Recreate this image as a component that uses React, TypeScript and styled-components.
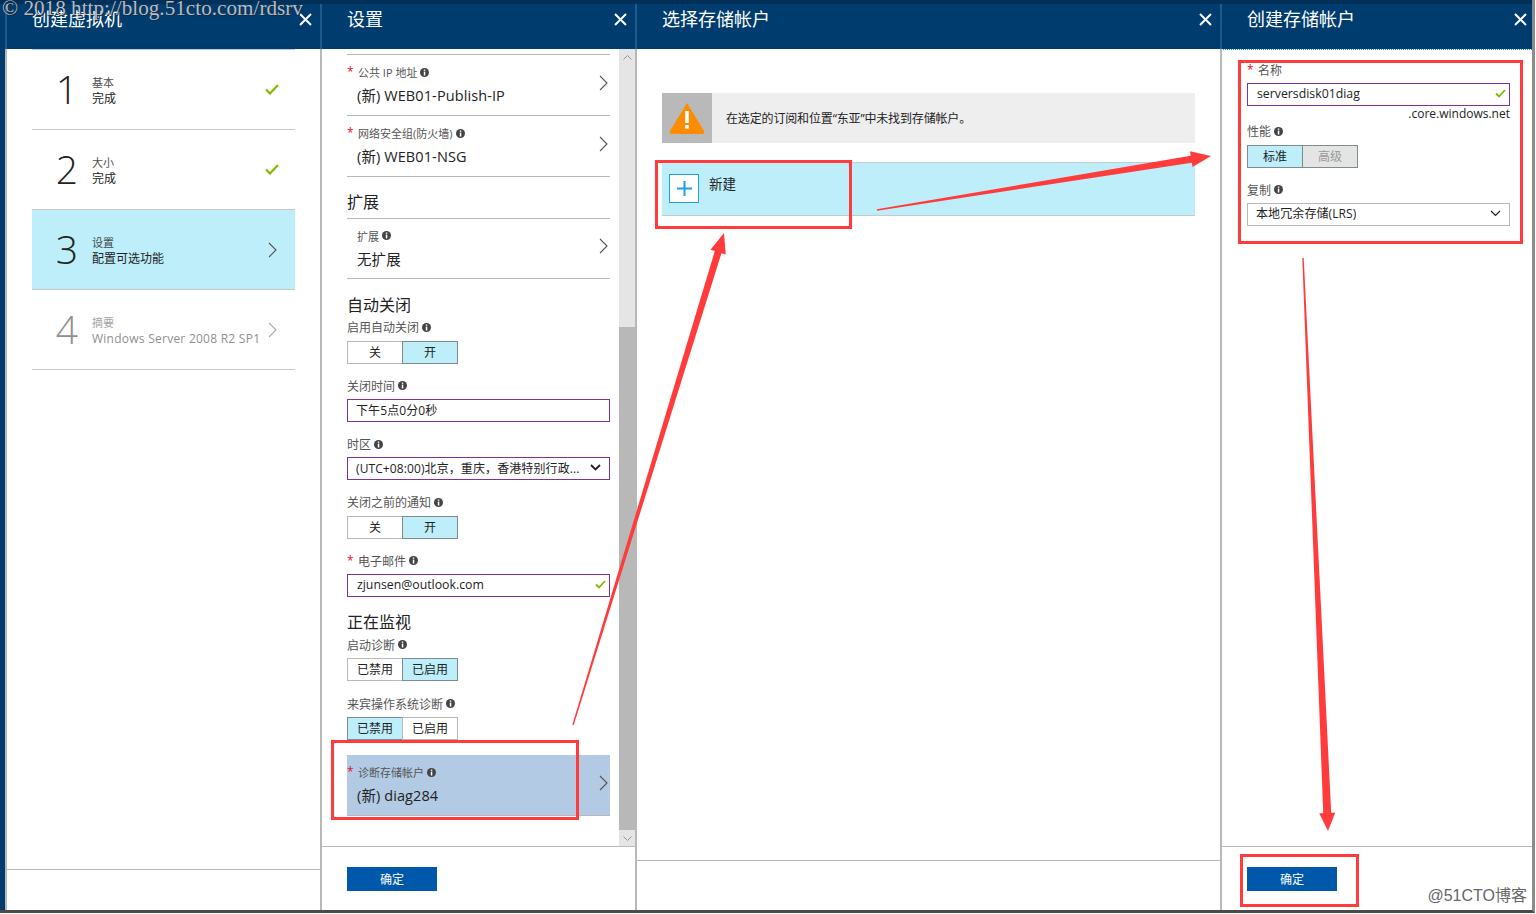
import React from 'react';
import styled, { createGlobalStyle } from 'styled-components';

const FONT = '"Open Sans", "Noto Sans CJK SC", sans-serif';

const GlobalStyle = createGlobalStyle`
    * {
        box-sizing: border-box;
    }
    html,
    body {
        margin: 0;
        padding: 0;
        background: #fff;
        font-family: ${FONT};
        overflow: hidden;
    }
`;

const Screen = styled.div`
    position: relative;
    width: 1535px;
    height: 913px;
    border-right: 3px solid #8c8c8c;
    border-bottom: 3px solid #4a4a4a;
    background: #003c6e;
    display: flex;
    flex-direction: column;
`;

const TopStrip = styled.div`
    height: 4px;
    background: #002f58;
`;

const Blades = styled.div`
    flex: 1;
    display: flex;
    padding-left: 5px;
`;

const Blade = styled.section<{ $width: number }>`
    width: ${(p) => p.$width}px;
    display: flex;
    flex-direction: column;
`;

const BladeHeader = styled.header<{ $tight?: boolean }>`
    height: 45px;
    flex: none;
    display: flex;
    justify-content: space-between;
    border-left: 2px solid #23598a;
    padding: 5px ${(p) => (p.$tight ? 5 : 8)}px 0 25px;
    color: #fff;
`;

const BladeTitle = styled.h2`
    margin: 0;
    font-size: 18px;
    font-weight: 400;
    line-height: 20px;
`;

const CloseIcon = styled.svg`
    width: 13px;
    height: 13px;
    margin-top: 4px;
    stroke: #fff;
    stroke-width: 2;
    fill: none;
`;

const BladeMain = styled.div`
    flex: 1;
    min-height: 0;
    display: flex;
    flex-direction: column;
    background: #fff;
    border-left: 2px solid #b8b8b8;
`;

const BladeBody = styled.div`
    flex: 1;
    min-height: 0;
    display: flex;
    overflow: hidden;
`;

const DottedBody = styled.div`
    flex: 1;
    min-height: 0;
    border-top: 1px dotted #1ba1e2;
    border-left: 1px dotted #1ba1e2;
    margin-left: -1px;
    padding: 13px 22px 0 25px;
`;

const BladeFooter = styled.footer<{ $height: number }>`
    height: ${(p) => p.$height}px;
    flex: none;
    border-top: 1px solid #b8b8b8;
    padding: 20px 0 0 25px;
`;

const OkButton = styled.div`
    width: 90px;
    height: 24px;
    background: #0058ab;
    color: #fff;
    font-size: 12px;
    line-height: 26px;
    text-align: center;
`;

/* step list */
const StepList = styled.div`
    flex: 1;
    padding-left: 25px;
`;

const Step = styled.div<{ $active?: boolean; $muted?: boolean }>`
    width: 263px;
    height: 80px;
    display: grid;
    grid-template-columns: 60px minmax(0, 1fr) 46px;
    align-items: center;
    border-bottom: 1px solid #c8c8c8;
    background: ${(p) => (p.$active ? '#bdeefa' : 'transparent')};
    color: ${(p) => (p.$muted ? '#8f8f8f' : '#222')};

    &:first-child {
        height: 81px;
        border-top: 1px solid #b9cfe0;
    }
`;

const StepNumber = styled.div`
    font-size: 39px;
    font-weight: 300;
    line-height: 40px;
    text-align: center;
    padding: 0 0 2px 10px;
`;

const StepText = styled.div`
    white-space: nowrap;
    padding-top: 2px;
`;

const StepTitle = styled.div`
    font-size: 11px;
    line-height: 15px;
    opacity: 0.8;
`;

const StepSub = styled.div<{ $spaced?: boolean }>`
    margin-top: 1px;
    font-size: 12px;
    line-height: 16px;
    letter-spacing: ${(p) => (p.$spaced ? 0.25 : 0)}px;
`;

const StepIcon = styled.div`
    display: flex;
    justify-content: center;
`;

/* settings form */
const SettingsColumn = styled.div`
    flex: 1;
    min-width: 0;
    padding: 5px 9px 0 25px;
`;

const NavRow = styled.div<{ $selected?: boolean }>`
    height: 61px;
    margin-top: ${(p) => (p.$selected ? 15 : 0)}px;
    display: flex;
    align-items: center;
    justify-content: space-between;
    border-bottom: 1px solid #b8b8b8;
    background: ${(p) => (p.$selected ? '#b2cae3' : 'transparent')};
    padding-right: 2px;

    & > svg {
        margin-bottom: 5px;
    }
`;

const NavRowTop = styled(NavRow)<{ $tall?: boolean }>`
    height: ${(p) => (p.$tall ? 62 : 61)}px;
    border-top: 1px solid #b8b8b8;
`;

const NavRowText = styled.div`
    padding-top: 1px;
`;

const NavLabel = styled.div<{ $indent?: boolean }>`
    display: flex;
    align-items: center;
    gap: 3px;
    height: 14px;
    font-size: 11px;
    color: #555;
    padding-left: ${(p) => (p.$indent ? 10 : 0)}px;
    white-space: nowrap;
`;

const NavValue = styled.div`
    margin-top: 7px;
    padding-left: 10px;
    font-size: 14.5px;
    letter-spacing: 0.1px;
    line-height: 20px;
    color: #222;
    white-space: nowrap;
`;

const Star = styled.span`
    color: #e81123;
    font-size: 12px;
    line-height: 14px;
    width: 11px;
    flex: none;
    margin-right: -3px;
`;

const SectionHeading = styled.h3<{ $top: number }>`
    margin: ${(p) => p.$top}px 0 0;
    font-size: 16px;
    font-weight: 400;
    line-height: 22px;
    color: #222;

    & + div {
        margin-top: 4.67px;
    }
`;

const Field = styled.div<{ $top?: number }>`
    margin-top: ${(p) => p.$top ?? 15}px;
`;

const FieldLabel = styled.div`
    display: flex;
    align-items: center;
    gap: 3px;
    height: 14px;
    margin-bottom: 6.33px;
    font-size: 12px;
    color: #555;
    white-space: nowrap;
`;

const Toggle = styled.div`
    display: flex;
    width: 111px;
    height: 23px;
`;

const ToggleOption = styled.div<{ $on?: boolean; $disabled?: boolean }>`
    flex: 1;
    border: 1px solid ${(p) => (p.$on || p.$disabled ? '#7f8c8d' : '#b8b8b8')};
    margin-left: -1px;
    background: ${(p) => (p.$on ? '#bdeefa' : p.$disabled ? '#e4e4e4' : '#fff')};
    color: ${(p) => (p.$disabled ? '#999' : '#222')};
    font-size: 12px;
    line-height: 21px;
    text-align: center;

    &:first-child {
        margin-left: 0;
    }
`;

const InputBox = styled.div<{ $plain?: boolean }>`
    height: 23px;
    display: flex;
    align-items: center;
    justify-content: space-between;
    border: 1px solid ${(p) => (p.$plain ? '#b8b8b8' : '#7f2f9f')};
    padding: 0 3px 2px 9px;
    font-size: 12.3px;
    color: #222;
    white-space: nowrap;
`;

const SelectText = styled.span`
    font-size: 12px;
    letter-spacing: 0.1px;
    margin-left: -1px;
    overflow: hidden;
`;

const SelectCaret = styled.svg`
    width: 11px;
    height: 7px;
    margin-right: 5px;
    fill: none;
    stroke: #222;
`;

const Hint = styled.div`
    height: 18px;
    font-size: 12px;
    line-height: 16px;
    text-align: right;
    color: #222;

    & + div {
        margin-top: 0;
    }
`;

/* scroll bar */
const ScrollBar = styled.div`
    width: 16px;
    flex: none;
    display: flex;
    flex-direction: column;
    background: #e5e5e5;
`;

const ScrollArrow = styled.div`
    height: 16px;
    flex: none;
    display: flex;
    align-items: center;
    justify-content: center;
    background: #e5e5e5;
`;

const ScrollSpacer = styled.div`
    height: 262px;
    flex: none;
`;

const ScrollThumb = styled.div`
    flex: 1;
    background: #b8b8b8;
`;

/* storage account blade */
const StorageColumn = styled.div`
    flex: 1;
    padding: 44px 25px 0;
`;

const WarningBar = styled.div`
    height: 50px;
    display: flex;
    align-items: center;
    gap: 14px;
    background: #eeeeee;
    font-size: 12px;
    color: #222;
    letter-spacing: -0.15px;
`;

const WarningIconBox = styled.div`
    width: 50px;
    height: 50px;
    display: flex;
    align-items: center;
    justify-content: center;
    background: #b9b9b9;
`;

const CreateRow = styled.div`
    height: 54px;
    margin-top: 19px;
    display: flex;
    gap: 10px;
    padding: 11px 0 0 7px;
    background: #bdeefa;
    border-top: 1px solid #c8c8c8;
    border-bottom: 1px solid #c8c8c8;
    font-size: 13.5px;
    line-height: 20px;
    color: #222;
`;

const PlusBox = styled.div`
    width: 30px;
    height: 29px;
    display: flex;
    align-items: center;
    justify-content: center;
    background: #fff;
    border: 1px solid #1ba1e2;
`;

/* annotations drawn over the page */
const Annotations = styled.svg`
    position: absolute;
    left: 0;
    top: 0;
    width: 1536px;
    height: 914px;
    pointer-events: none;
`;

const Watermark = styled.div`
    position: absolute;
    left: 2px;
    top: 0;
    font-family: "Liberation Serif", serif;
    font-size: 21.2px;
    line-height: 16px;
    color: #b4bcc6;
    text-shadow: 1px 1px 0 #1c2a38;
    white-space: nowrap;
`;

const Stamp = styled.div`
    position: absolute;
    right: 5px;
    bottom: 4px;
    font-family: "Liberation Sans", "Noto Sans CJK SC", sans-serif;
    font-size: 16px;
    line-height: 20px;
    color: #666;
    white-space: nowrap;
`;

const Close = () => (
    <CloseIcon viewBox="0 0 13 13">
        <path d="M1 1l11 11M12 1L1 12" />
    </CloseIcon>
);

const Check = () => (
    <svg width="14" height="11" viewBox="0 0 14 11" fill="none" stroke="#7fba00" strokeWidth="2.2">
        <path d="M1 5.5l4 4L13 1" />
    </svg>
);

const SmallCheck = () => (
    <svg width="11" height="9" viewBox="0 0 11 9" fill="none" stroke="#7fba00" strokeWidth="1.8">
        <path d="M1 4.5l3 3L10 1" />
    </svg>
);

const Chevron = ({ color = '#555' }: { color?: string }) => (
    <svg width="9" height="16" viewBox="0 0 9 16" fill="none" stroke={color} strokeWidth="1.1">
        <path d="M1 1l7 7-7 7" />
    </svg>
);

const ChevronDown = ({ width = 1.8 }: { width?: number }) => (
    <SelectCaret viewBox="0 0 11 7" strokeWidth={width}>
        <path d="M1 1l4.5 4.5L10 1" />
    </SelectCaret>
);

const Info = () => (
    <svg width="9" height="9" viewBox="0 0 9 9">
        <circle cx="4.5" cy="4.5" r="4.5" fill="#444" />
        <rect x="3.8" y="1.5" width="1.5" height="1.3" fill="#fff" />
        <rect x="3.8" y="3.6" width="1.5" height="3.9" fill="#fff" />
    </svg>
);

const ScrollCaret = ({ up }: { up?: boolean }) => (
    <svg width="9" height="5" viewBox="0 0 9 5" fill="none" stroke="#999" strokeWidth="1">
        <path d={up ? 'M0.5 4.5l4-4 4 4' : 'M0.5 0.5l4 4 4-4'} />
    </svg>
);

// tail is a point, the shaft widens up to the neck of the head
const arrowPoints = (x1: number, y1: number, x2: number, y2: number, neck: number, head: number, len: number): string => {
    const d = Math.hypot(x2 - x1, y2 - y1);
    const ux = (x2 - x1) / d;
    const uy = (y2 - y1) / d;
    const nx = -uy;
    const ny = ux;
    const bx = x2 - ux * len;
    const by = y2 - uy * len;
    const pts = [
        [x1 + nx * 0.7, y1 + ny * 0.7],
        [bx + (nx * neck) / 2, by + (ny * neck) / 2],
        [bx + (nx * head) / 2, by + (ny * head) / 2],
        [x2, y2],
        [bx - (nx * head) / 2, by - (ny * head) / 2],
        [bx - (nx * neck) / 2, by - (ny * neck) / 2],
        [x1 - nx * 0.7, y1 - ny * 0.7],
    ];
    return pts.map((p) => p.join(',')).join(' ');
};

const RED = '#ff3b3b';

const redBoxes = [
    { x: 332.5, y: 741.5, w: 245, h: 77 },
    { x: 656.5, y: 161.5, w: 194, h: 66 },
    { x: 1239.5, y: 61.5, w: 282, h: 181 },
    { x: 1241.5, y: 855.5, w: 116, h: 50 },
];

const redArrows = [
    arrowPoints(573, 725, 724, 233, 7, 16, 20),
    arrowPoints(877, 210, 1211, 156, 7, 16, 20),
    arrowPoints(1303, 258, 1328, 831, 8, 16, 18),
];

const steps = [
    { n: '1', title: '基本', sub: '完成', done: true },
    { n: '2', title: '大小', sub: '完成', done: true },
    { n: '3', title: '设置', sub: '配置可选功能', active: true },
    { n: '4', title: '摘要', sub: 'Windows Server 2008 R2 SP1', muted: true },
];

const App: React.FC = () => (
    <Screen>
        <GlobalStyle />
        <TopStrip />
        <Blades>
            <Blade $width={315}>
                <BladeHeader>
                    <BladeTitle>创建虚拟机</BladeTitle>
                    <Close />
                </BladeHeader>
                <BladeMain>
                    <BladeBody>
                        <StepList>
                            {steps.map((s) => (
                                <Step key={s.n} $active={s.active} $muted={s.muted}>
                                    <StepNumber>{s.n}</StepNumber>
                                    <StepText>
                                        <StepTitle>{s.title}</StepTitle>
                                        <StepSub $spaced={s.muted}>{s.sub}</StepSub>
                                    </StepText>
                                    <StepIcon>
                                        {s.done ? <Check /> : <Chevron color={s.muted ? '#aaa' : '#555'} />}
                                    </StepIcon>
                                </Step>
                            ))}
                        </StepList>
                    </BladeBody>
                    <BladeFooter $height={41} />
                </BladeMain>
            </Blade>

            <Blade $width={315}>
                <BladeHeader>
                    <BladeTitle>设置</BladeTitle>
                    <Close />
                </BladeHeader>
                <BladeMain>
                    <BladeBody>
                        <SettingsColumn>
                            <NavRowTop $tall>
                                <NavRowText>
                                    <NavLabel>
                                        <Star>*</Star>公共 IP 地址 <Info />
                                    </NavLabel>
                                    <NavValue>(新) WEB01-Publish-IP</NavValue>
                                </NavRowText>
                                <Chevron />
                            </NavRowTop>
                            <NavRow>
                                <NavRowText>
                                    <NavLabel>
                                        <Star>*</Star>网络安全组(防火墙) <Info />
                                    </NavLabel>
                                    <NavValue>(新) WEB01-NSG</NavValue>
                                </NavRowText>
                                <Chevron />
                            </NavRow>
                            <SectionHeading $top={14.4}>扩展</SectionHeading>
                            <NavRowTop>
                                <NavRowText>
                                    <NavLabel $indent>
                                        扩展 <Info />
                                    </NavLabel>
                                    <NavValue>无扩展</NavValue>
                                </NavRowText>
                                <Chevron />
                            </NavRowTop>
                            <SectionHeading $top={14.7}>自动关闭</SectionHeading>
                            <Field>
                                <FieldLabel>
                                    启用自动关闭 <Info />
                                </FieldLabel>
                                <Toggle>
                                    <ToggleOption>关</ToggleOption>
                                    <ToggleOption $on>开</ToggleOption>
                                </Toggle>
                            </Field>
                            <Field>
                                <FieldLabel>
                                    关闭时间 <Info />
                                </FieldLabel>
                                <InputBox>
                                    <SelectText>下午5点0分0秒</SelectText>
                                </InputBox>
                            </Field>
                            <Field>
                                <FieldLabel>
                                    时区 <Info />
                                </FieldLabel>
                                <InputBox>
                                    <SelectText>(UTC+08:00)北京，重庆，香港特别行政...</SelectText>
                                    <ChevronDown />
                                </InputBox>
                            </Field>
                            <Field>
                                <FieldLabel>
                                    关闭之前的通知 <Info />
                                </FieldLabel>
                                <Toggle>
                                    <ToggleOption>关</ToggleOption>
                                    <ToggleOption $on>开</ToggleOption>
                                </Toggle>
                            </Field>
                            <Field>
                                <FieldLabel>
                                    <Star>*</Star>电子邮件 <Info />
                                </FieldLabel>
                                <InputBox>
                                    zjunsen@outlook.com
                                    <SmallCheck />
                                </InputBox>
                            </Field>
                            <SectionHeading $top={14}>正在监视</SectionHeading>
                            <Field>
                                <FieldLabel>
                                    启动诊断 <Info />
                                </FieldLabel>
                                <Toggle>
                                    <ToggleOption>已禁用</ToggleOption>
                                    <ToggleOption $on>已启用</ToggleOption>
                                </Toggle>
                            </Field>
                            <Field $top={15.7}>
                                <FieldLabel>
                                    来宾操作系统诊断 <Info />
                                </FieldLabel>
                                <Toggle>
                                    <ToggleOption $on>已禁用</ToggleOption>
                                    <ToggleOption>已启用</ToggleOption>
                                </Toggle>
                            </Field>
                            <NavRow $selected>
                                <NavRowText>
                                    <NavLabel>
                                        <Star>*</Star>诊断存储帐户 <Info />
                                    </NavLabel>
                                    <NavValue>(新) diag284</NavValue>
                                </NavRowText>
                                <Chevron />
                            </NavRow>
                        </SettingsColumn>
                        <ScrollBar>
                            <ScrollArrow>
                                <ScrollCaret up />
                            </ScrollArrow>
                            <ScrollSpacer />
                            <ScrollThumb />
                            <ScrollArrow>
                                <ScrollCaret />
                            </ScrollArrow>
                        </ScrollBar>
                    </BladeBody>
                    <BladeFooter $height={64}>
                        <OkButton>确定</OkButton>
                    </BladeFooter>
                </BladeMain>
            </Blade>

            <Blade $width={585}>
                <BladeHeader>
                    <BladeTitle>选择存储帐户</BladeTitle>
                    <Close />
                </BladeHeader>
                <BladeMain>
                    <BladeBody>
                        <StorageColumn>
                            <WarningBar>
                                <WarningIconBox>
                                    <svg width="36" height="32" viewBox="0 0 36 32">
                                        <path
                                            d="M18 1L35 29a2 2 0 0 1-2 3H3a2 2 0 0 1-2-3Z"
                                            fill="#ff8c00"
                                        />
                                        <rect x="16.2" y="9" width="3.6" height="12" fill="#fff" />
                                        <rect x="16.2" y="23" width="3.6" height="3.6" fill="#fff" />
                                    </svg>
                                </WarningIconBox>
                                在选定的订阅和位置“东亚”中未找到存储帐户。
                            </WarningBar>
                            <CreateRow>
                                <PlusBox>
                                    <svg width="15" height="15" viewBox="0 0 15 15" stroke="#1ba1e2" strokeWidth="2">
                                        <path d="M7.5 0v15M0 7.5h15" />
                                    </svg>
                                </PlusBox>
                                新建
                            </CreateRow>
                        </StorageColumn>
                    </BladeBody>
                    <BladeFooter $height={50} />
                </BladeMain>
            </Blade>

            <Blade $width={312}>
                <BladeHeader $tight>
                    <BladeTitle>创建存储帐户</BladeTitle>
                    <Close />
                </BladeHeader>
                <BladeMain>
                    <BladeBody>
                        <DottedBody>
                            <FieldLabel>
                                <Star>*</Star>名称
                            </FieldLabel>
                            <InputBox>
                                serversdisk01diag
                                <SmallCheck />
                            </InputBox>
                            <Hint>.core.windows.net</Hint>
                            <Field>
                                <FieldLabel>
                                    性能 <Info />
                                </FieldLabel>
                                <Toggle>
                                    <ToggleOption $on>标准</ToggleOption>
                                    <ToggleOption $disabled>高级</ToggleOption>
                                </Toggle>
                            </Field>
                            <Field>
                                <FieldLabel>
                                    复制 <Info />
                                </FieldLabel>
                                <InputBox $plain>
                                    <SelectText>本地冗余存储(LRS)</SelectText>
                                    <ChevronDown width={1.2} />
                                </InputBox>
                            </Field>
                        </DottedBody>
                    </BladeBody>
                    <BladeFooter $height={64}>
                        <OkButton>确定</OkButton>
                    </BladeFooter>
                </BladeMain>
            </Blade>
        </Blades>

        <Watermark>© 2018 http://blog.51cto.com/rdsrv</Watermark>
        <Annotations viewBox="0 0 1536 914">
            {redBoxes.map((b) => (
                <rect key={b.x} x={b.x} y={b.y} width={b.w} height={b.h} fill="none" stroke={RED} strokeWidth="3" />
            ))}
            {redArrows.map((pts) => (
                <polygon key={pts} points={pts} fill={RED} />
            ))}
        </Annotations>
        <Stamp>@51CTO博客</Stamp>
    </Screen>
);

export default App;
